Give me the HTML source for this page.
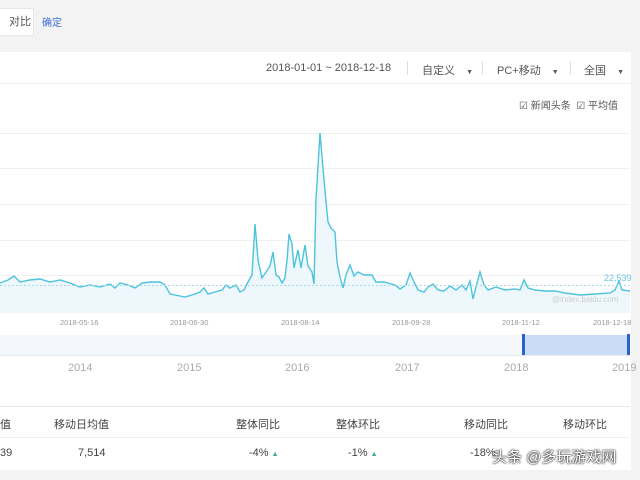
<!DOCTYPE html><html><head><meta charset="utf-8"><style>
body{margin:0;width:640px;height:480px;overflow:hidden;background:#f3f3f3;font-family:"Liberation Sans","Noto Sans CJK SC",sans-serif;position:relative}
.a{position:absolute;white-space:nowrap}
</style></head><body>
<div class="a" style="left:-2px;top:8px;width:32px;height:26px;background:#fff;border:1px solid #e6e6e6;font-size:11px;color:#555;line-height:26px;text-align:right;padding-right:2px">对比</div>
<div class="a" style="left:42px;top:14px;font-size:10px;color:#3b6fd6">确定</div>
<div class="a" style="left:0;top:52px;width:631px;height:418px;background:#fff"></div>
<div class="a" style="left:0;top:83px;width:631px;height:1px;background:#f0f0f0"></div>
<div class="a" style="left:266px;top:62px;font-size:11px;color:#555">2018-01-01 ~ 2018-12-18</div>
<div class="a" style="left:407px;top:61px;width:1px;height:14px;background:#ddd"></div>
<div class="a" style="left:422px;top:62px;font-size:11px;color:#555">自定义 <span style="font-size:7px;margin-left:8px">▼</span></div>
<div class="a" style="left:482px;top:61px;width:1px;height:14px;background:#ddd"></div>
<div class="a" style="left:497px;top:62px;font-size:11px;color:#555">PC+移动 <span style="font-size:7px;margin-left:8px">▼</span></div>
<div class="a" style="left:570px;top:61px;width:1px;height:14px;background:#ddd"></div>
<div class="a" style="left:584px;top:62px;font-size:11px;color:#555">全国 <span style="font-size:7px;margin-left:8px">▼</span></div>
<div class="a" style="left:519px;top:97px;font-size:10px;color:#555">☑ 新闻头条 &nbsp;☑ 平均值</div>
<svg class="a" style="left:0;top:0" width="640" height="480">
<g stroke="#f0f0f0" stroke-width="1">
<line x1="0" y1="133.5" x2="630" y2="133.5"/><line x1="0" y1="168.5" x2="630" y2="168.5"/><line x1="0" y1="204.5" x2="630" y2="204.5"/><line x1="0" y1="240.5" x2="630" y2="240.5"/><line x1="0" y1="275.5" x2="630" y2="275.5"/></g>
<path d="M0,283 L8,280 L14,276 L20,282 L30,280 L40,279 L50,282 L60,280 L70,283 L80,287 L90,285 L100,287 L110,284 L115,288 L120,283 L128,285 L135,288 L142,283 L150,282 L160,282 L165,285 L170,294 L175,295 L185,297 L195,294 L200,292 L204,288 L208,294 L215,292 L222,290 L226,285 L230,288 L236,285 L240,292 L244,290 L248,282 L252,275 L255,224 L258,260 L262,278 L266,272 L270,266 L273,252 L276,275 L279,277 L282,283 L285,278 L287,260 L289,234 L292,244 L294,268 L298,250 L301,268 L305,245 L308,266 L312,272 L314,284 L316,200 L320,133 L324,180 L328,222 L331,228 L335,232 L337,262 L340,277 L343,288 L346,275 L350,265 L354,276 L358,272 L364,275 L372,275 L376,282 L384,282 L395,285 L400,289 L406,285 L410,273 L414,282 L418,290 L424,292 L428,287 L433,284 L438,290 L444,291 L450,286 L456,290 L462,285 L466,290 L470,281 L473,299 L476,287 L480,272 L484,285 L488,290 L496,287 L505,290 L515,289 L520,290 L524,280 L528,288 L535,290 L545,291 L555,291 L565,293 L580,295 L595,294 L610,293 L615,290 L619,281 L622,290 L630,291 L630,313 L0,313 Z" fill="#eef8fc" stroke="none"/>
<path d="M0,283 L8,280 L14,276 L20,282 L30,280 L40,279 L50,282 L60,280 L70,283 L80,287 L90,285 L100,287 L110,284 L115,288 L120,283 L128,285 L135,288 L142,283 L150,282 L160,282 L165,285 L170,294 L175,295 L185,297 L195,294 L200,292 L204,288 L208,294 L215,292 L222,290 L226,285 L230,288 L236,285 L240,292 L244,290 L248,282 L252,275 L255,224 L258,260 L262,278 L266,272 L270,266 L273,252 L276,275 L279,277 L282,283 L285,278 L287,260 L289,234 L292,244 L294,268 L298,250 L301,268 L305,245 L308,266 L312,272 L314,284 L316,200 L320,133 L324,180 L328,222 L331,228 L335,232 L337,262 L340,277 L343,288 L346,275 L350,265 L354,276 L358,272 L364,275 L372,275 L376,282 L384,282 L395,285 L400,289 L406,285 L410,273 L414,282 L418,290 L424,292 L428,287 L433,284 L438,290 L444,291 L450,286 L456,290 L462,285 L466,290 L470,281 L473,299 L476,287 L480,272 L484,285 L488,290 L496,287 L505,290 L515,289 L520,290 L524,280 L528,288 L535,290 L545,291 L555,291 L565,293 L580,295 L595,294 L610,293 L615,290 L619,281 L622,290 L630,291" fill="none" stroke="#4cc3dd" stroke-width="1.4"/>
<line x1="0" y1="285.5" x2="630" y2="285.5" stroke="#a9d9e6" stroke-dasharray="2,2"/>
<text x="604" y="281" font-size="9" fill="#6fc6e0" font-family="Liberation Sans">22,539</text>
<text x="552" y="302" font-size="8" fill="#ccc" font-family="Liberation Sans">@index.baidu.com</text>
<g font-size="7.5" fill="#999" font-family="Liberation Sans">
<text x="60" y="325">2018-05-16</text><text x="170" y="325">2018-06-30</text><text x="281" y="325">2018-08-14</text><text x="392" y="325">2018-09-28</text><text x="502" y="325">2018-11-12</text><text x="593" y="325">2018-12-18</text></g>
<rect x="0" y="335" width="630" height="20" fill="#f4f7fb"/>
<rect x="524" y="335" width="106" height="20" fill="#c9dcf8"/>
<rect x="522" y="334" width="3" height="21" fill="#2a63c8"/><rect x="627" y="334" width="3" height="21" fill="#2a63c8"/>
<line x1="0" y1="355.5" x2="630" y2="355.5" stroke="#e6e9ee"/>
<g font-size="11" fill="#aaa" font-family="Liberation Sans">
<text x="68" y="371">2014</text><text x="177" y="371">2015</text><text x="285" y="371">2016</text><text x="395" y="371">2017</text><text x="504" y="371">2018</text><text x="612" y="371">2019</text></g>
<line x1="0" y1="406.5" x2="630" y2="406.5" stroke="#e8e8e8"/>
<line x1="0" y1="437.5" x2="630" y2="437.5" stroke="#f0f0f0"/>
</svg>
<div class="a" style="left:0;top:416px;font-size:11px;color:#444">值</div>
<div class="a" style="left:54px;top:416px;font-size:11px;color:#444">移动日均值</div>
<div class="a" style="left:236px;top:416px;font-size:11px;color:#444">整体同比</div>
<div class="a" style="left:336px;top:416px;font-size:11px;color:#444">整体环比</div>
<div class="a" style="left:464px;top:416px;font-size:11px;color:#444">移动同比</div>
<div class="a" style="left:563px;top:416px;font-size:11px;color:#444">移动环比</div>
<div class="a" style="left:0;top:447px;font-size:11px;color:#444">39</div>
<div class="a" style="left:78px;top:447px;font-size:11px;color:#444">7,514</div>
<div class="a" style="left:249px;top:447px;font-size:11px;color:#444">-4% <span style="color:#3a9;font-size:7px">▲</span></div>
<div class="a" style="left:348px;top:447px;font-size:11px;color:#444">-1% <span style="color:#3a9;font-size:7px">▲</span></div>
<div class="a" style="left:470px;top:447px;font-size:11px;color:#444">-18%</div>
<div class="a" style="left:492px;top:446px;font-size:15px;color:#fff;text-shadow:0 0 2px #000,0 0 1px #000">头条 @多玩游戏网</div>
</body></html>
